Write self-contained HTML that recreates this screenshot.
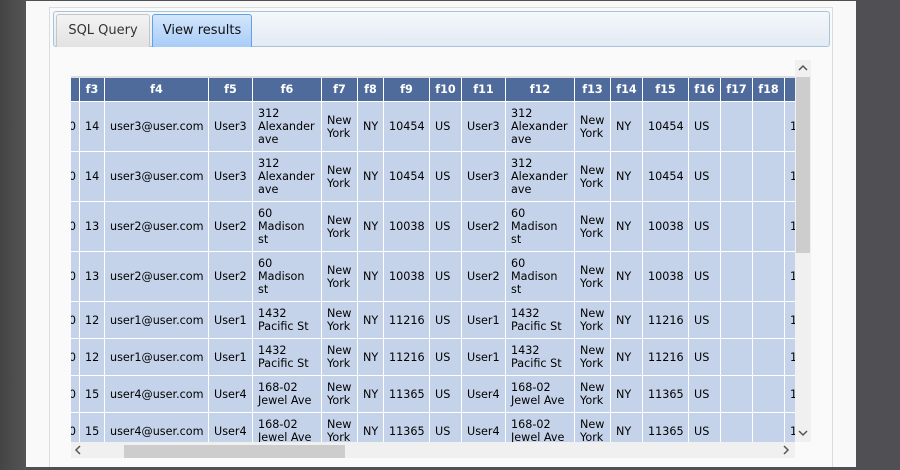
<!DOCTYPE html>
<html style="overflow:hidden"><head><style>
*{margin:0;padding:0;box-sizing:border-box}
html,body{width:900px;height:470px;overflow:hidden}
body{background:#505054;position:relative;font-family:"DejaVu Sans","Liberation Sans",sans-serif}
#l{position:absolute;left:0;top:0;width:26px;height:470px;background:linear-gradient(90deg,#444,#555)}
#pg{position:absolute;left:26px;top:1px;width:830px;height:466px;background:#f9f9f9}
#pn{position:absolute;left:49px;top:7px;width:784px;height:460px;border:1px solid #dcdcdc;border-bottom:none;background:#fafafa}
#tb{position:absolute;left:53px;top:11px;width:777px;height:36px;border:1px solid #a9c3dc;border-radius:3px;background:linear-gradient(#f5f8fb,#e2eaf3)}
.t{position:absolute;top:14px;height:33px;font-size:13px;line-height:32px;text-align:center;border:1px solid #c6c6c6;border-bottom:none;border-radius:3px 3px 0 0}
#t1{left:56px;width:94px;background:linear-gradient(#f3f3f3,#e2e2e2);color:#333}
#t2{left:152px;width:100px;background:linear-gradient(#d3e6fc,#a8ccf8);border-color:#5fa3e2;color:#111}
#vp{position:absolute;left:71px;top:76px;width:724px;height:366px;overflow:hidden;border-top:2px solid #ddd;background:#f0f0f0}
#tbl{position:absolute;left:-31px;top:0}
.r{display:flex;height:50px}
.c{flex:none;border-right:1px solid #fff;border-bottom:1px solid #fff;padding:0 5px;display:flex;align-items:center;font-size:11.2px;line-height:13px;color:#000;background:#c5d3ea;white-space:nowrap;overflow:hidden}
.h .c{background:#4e6b9b;color:#fff;font-weight:bold;justify-content:center;height:24px;padding:0}
.h{height:24px}.s{height:37px}
.w0{width:40px;justify-content:flex-end;padding-right:3px}.w3{width:25px}.w4{width:104px}.w5{width:44px}.w6{width:69px}.w7{width:36px}.w8{width:26px}.w9{width:46px}.w10{width:32px}.w11{width:44px}.w12{width:69px}.w13{width:36px}.w14{width:32px}.w15{width:46px}.w16{width:32px}.w17{width:32px}.w18{width:32px}.w19{width:60px}
#vs{position:absolute;left:795px;top:60px;width:16px;height:382px;background:#f0f0f0}
#vt{position:absolute;left:796px;top:77px;width:14px;height:176px;background:#cdcdcd}
#hs{position:absolute;left:71px;top:442px;width:724px;height:16px;background:#f0f0f0}
#ht{position:absolute;left:124px;top:445px;width:221px;height:13px;background:#cdcdcd}
.a{position:absolute;font-size:13px;color:#555;line-height:14px}
</style></head><body>
<div id="l"></div>
<div id="pg"></div>
<div id="pn"></div>
<div id="tb"></div>
<div class="t" id="t1">SQL Query</div>
<div class="t" id="t2">View results</div>
<div id="vp"><div id="tbl">
<div class="r h"><div class="c w0"></div><div class="c w3">f3</div><div class="c w4">f4</div><div class="c w5">f5</div><div class="c w6">f6</div><div class="c w7">f7</div><div class="c w8">f8</div><div class="c w9">f9</div><div class="c w10">f10</div><div class="c w11">f11</div><div class="c w12">f12</div><div class="c w13">f13</div><div class="c w14">f14</div><div class="c w15">f15</div><div class="c w16">f16</div><div class="c w17">f17</div><div class="c w18">f18</div><div class="c w19"></div></div>
<div class="r"><div class="c w0">0</div><div class="c w3">14</div><div class="c w4">user3@user.com</div><div class="c w5">User3</div><div class="c w6">312<br>Alexander<br>ave</div><div class="c w7">New<br>York</div><div class="c w8">NY</div><div class="c w9">10454</div><div class="c w10">US</div><div class="c w11">User3</div><div class="c w12">312<br>Alexander<br>ave</div><div class="c w13">New<br>York</div><div class="c w14">NY</div><div class="c w15">10454</div><div class="c w16">US</div><div class="c w17"></div><div class="c w18"></div><div class="c w19">1</div></div>
<div class="r"><div class="c w0">0</div><div class="c w3">14</div><div class="c w4">user3@user.com</div><div class="c w5">User3</div><div class="c w6">312<br>Alexander<br>ave</div><div class="c w7">New<br>York</div><div class="c w8">NY</div><div class="c w9">10454</div><div class="c w10">US</div><div class="c w11">User3</div><div class="c w12">312<br>Alexander<br>ave</div><div class="c w13">New<br>York</div><div class="c w14">NY</div><div class="c w15">10454</div><div class="c w16">US</div><div class="c w17"></div><div class="c w18"></div><div class="c w19">1</div></div>
<div class="r"><div class="c w0">0</div><div class="c w3">13</div><div class="c w4">user2@user.com</div><div class="c w5">User2</div><div class="c w6">60<br>Madison<br>st</div><div class="c w7">New<br>York</div><div class="c w8">NY</div><div class="c w9">10038</div><div class="c w10">US</div><div class="c w11">User2</div><div class="c w12">60<br>Madison<br>st</div><div class="c w13">New<br>York</div><div class="c w14">NY</div><div class="c w15">10038</div><div class="c w16">US</div><div class="c w17"></div><div class="c w18"></div><div class="c w19">1</div></div>
<div class="r"><div class="c w0">0</div><div class="c w3">13</div><div class="c w4">user2@user.com</div><div class="c w5">User2</div><div class="c w6">60<br>Madison<br>st</div><div class="c w7">New<br>York</div><div class="c w8">NY</div><div class="c w9">10038</div><div class="c w10">US</div><div class="c w11">User2</div><div class="c w12">60<br>Madison<br>st</div><div class="c w13">New<br>York</div><div class="c w14">NY</div><div class="c w15">10038</div><div class="c w16">US</div><div class="c w17"></div><div class="c w18"></div><div class="c w19">1</div></div>
<div class="r s"><div class="c w0">0</div><div class="c w3">12</div><div class="c w4">user1@user.com</div><div class="c w5">User1</div><div class="c w6">1432<br>Pacific St</div><div class="c w7">New<br>York</div><div class="c w8">NY</div><div class="c w9">11216</div><div class="c w10">US</div><div class="c w11">User1</div><div class="c w12">1432<br>Pacific St</div><div class="c w13">New<br>York</div><div class="c w14">NY</div><div class="c w15">11216</div><div class="c w16">US</div><div class="c w17"></div><div class="c w18"></div><div class="c w19">1</div></div>
<div class="r s"><div class="c w0">0</div><div class="c w3">12</div><div class="c w4">user1@user.com</div><div class="c w5">User1</div><div class="c w6">1432<br>Pacific St</div><div class="c w7">New<br>York</div><div class="c w8">NY</div><div class="c w9">11216</div><div class="c w10">US</div><div class="c w11">User1</div><div class="c w12">1432<br>Pacific St</div><div class="c w13">New<br>York</div><div class="c w14">NY</div><div class="c w15">11216</div><div class="c w16">US</div><div class="c w17"></div><div class="c w18"></div><div class="c w19">1</div></div>
<div class="r s"><div class="c w0">0</div><div class="c w3">15</div><div class="c w4">user4@user.com</div><div class="c w5">User4</div><div class="c w6">168-02<br>Jewel Ave</div><div class="c w7">New<br>York</div><div class="c w8">NY</div><div class="c w9">11365</div><div class="c w10">US</div><div class="c w11">User4</div><div class="c w12">168-02<br>Jewel Ave</div><div class="c w13">New<br>York</div><div class="c w14">NY</div><div class="c w15">11365</div><div class="c w16">US</div><div class="c w17"></div><div class="c w18"></div><div class="c w19">1</div></div>
<div class="r s"><div class="c w0">0</div><div class="c w3">15</div><div class="c w4">user4@user.com</div><div class="c w5">User4</div><div class="c w6">168-02<br>Jewel Ave</div><div class="c w7">New<br>York</div><div class="c w8">NY</div><div class="c w9">11365</div><div class="c w10">US</div><div class="c w11">User4</div><div class="c w12">168-02<br>Jewel Ave</div><div class="c w13">New<br>York</div><div class="c w14">NY</div><div class="c w15">11365</div><div class="c w16">US</div><div class="c w17"></div><div class="c w18"></div><div class="c w19">1</div></div>
</div></div>
<div id="vs"></div><div id="vt"></div>
<div id="hs"></div><div id="ht"></div>
<svg style="position:absolute;left:795px;top:62px" width="16" height="12"><path d="M4 8L8 4L12 8" stroke="#555" stroke-width="1.5" fill="none"/></svg>
<svg style="position:absolute;left:795px;top:427px" width="16" height="12"><path d="M4 4L8 8L12 4" stroke="#555" stroke-width="1.5" fill="none"/></svg>
<svg style="position:absolute;left:72px;top:444px" width="12" height="12"><path d="M8 2L4 6L8 10" stroke="#555" stroke-width="1.5" fill="none"/></svg>
<svg style="position:absolute;left:780px;top:444px" width="12" height="12"><path d="M4 2L8 6L4 10" stroke="#555" stroke-width="1.5" fill="none"/></svg>
</body></html>
